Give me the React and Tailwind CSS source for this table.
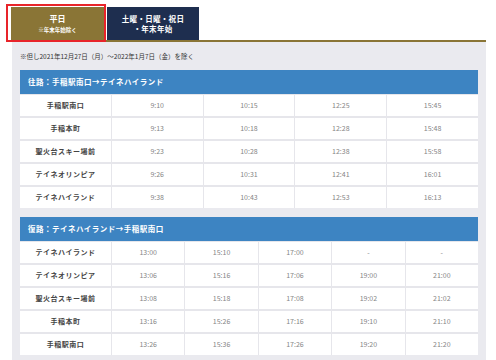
const outbound = [
  ["手稲駅南口", "9:10", "10:15", "12:25", "15:45"],
  ["手稲本町", "9:13", "10:18", "12:28", "15:48"],
  ["聖火台スキー場前", "9:23", "10:28", "12:38", "15:58"],
  ["テイネオリンピア", "9:26", "10:31", "12:41", "16:01"],
  ["テイネハイランド", "9:38", "10:43", "12:53", "16:13"],
];

const inbound = [
  ["テイネハイランド", "13:00", "15:10", "17:00", "-", "-"],
  ["テイネオリンピア", "13:06", "15:16", "17:06", "19:00", "21:00"],
  ["聖火台スキー場前", "13:08", "15:18", "17:08", "19:02", "21:02"],
  ["手稲本町", "13:16", "15:26", "17:16", "19:10", "21:10"],
  ["手稲駅南口", "13:26", "15:36", "17:26", "19:20", "21:20"],
];

function Timetable({ title, rows, cols }) {
  return (
    <div>
      <div className="h-[24px] bg-[#3d84c2] flex items-center pl-[8px] text-[7.5px] font-bold text-white tracking-[0.5px]">
        {title}
      </div>
      <div className={`grid ${cols} gap-x-px gap-y-[2px] bg-[#e6e6eb] pt-px`}>
        {rows.map((row, i) =>
          row.map((cell, j) => (
            <div
              key={`${i}-${j}`}
              className={
                "h-[21px] bg-white flex items-center justify-center text-[7px] " +
                (j === 0 ? "font-bold text-[#444] tracking-[0.5px]" : "text-[#858585]")
              }
            >
              {cell}
            </div>
          ))
        )}
      </div>
    </div>
  );
}

export default function App() {
  return (
    <div
      className="relative w-[496px] h-[360px] bg-white overflow-hidden"
      style={{ fontFamily: '"Noto Sans CJK JP", "Noto Sans", sans-serif' }}
    >
      <div className="flex gap-[3px] pl-[11px] pt-[7px]">
        <div className="w-[93px] h-[33px] bg-[#8a7536] flex flex-col items-center justify-center text-white">
          <div className="text-[8px] font-bold leading-[10px]">平日</div>
          <div className="text-[5.5px] font-bold leading-[8px] mt-[2px]">※年末年始除く</div>
        </div>
        <div className="w-[92px] h-[33px] bg-[#1e2e4f] flex flex-col items-center justify-center text-white text-[7.5px] font-bold leading-[10px] tracking-[0.3px]">
          <div>土曜・日曜・祝日</div>
          <div>・年末年始</div>
        </div>
      </div>
      <div className="ml-[11px] mr-[10px] h-[1.5px] bg-[#8a7536]" />
      <div className="ml-[12px] mr-[10px] bg-[#eaeaef] px-[8px] pt-[10px] pb-[5px]">
        <div className="text-[6.5px] leading-[9px] text-[#333] mb-[9px]">
          ※但し2021年12月27日（月）～2022年1月7日（金）を除く
        </div>
        <Timetable title="往路：手稲駅南口→テイネハイランド" rows={outbound} cols="grid-cols-5" />
        <div className="h-[9px]" />
        <Timetable title="復路：テイネハイランド→手稲駅南口" rows={inbound} cols="grid-cols-[91px_repeat(5,1fr)]" />
      </div>
      <div className="absolute left-[6px] top-[4px] w-[100px] h-[38px] border-2 border-[#e8242a]" />
    </div>
  );
}
